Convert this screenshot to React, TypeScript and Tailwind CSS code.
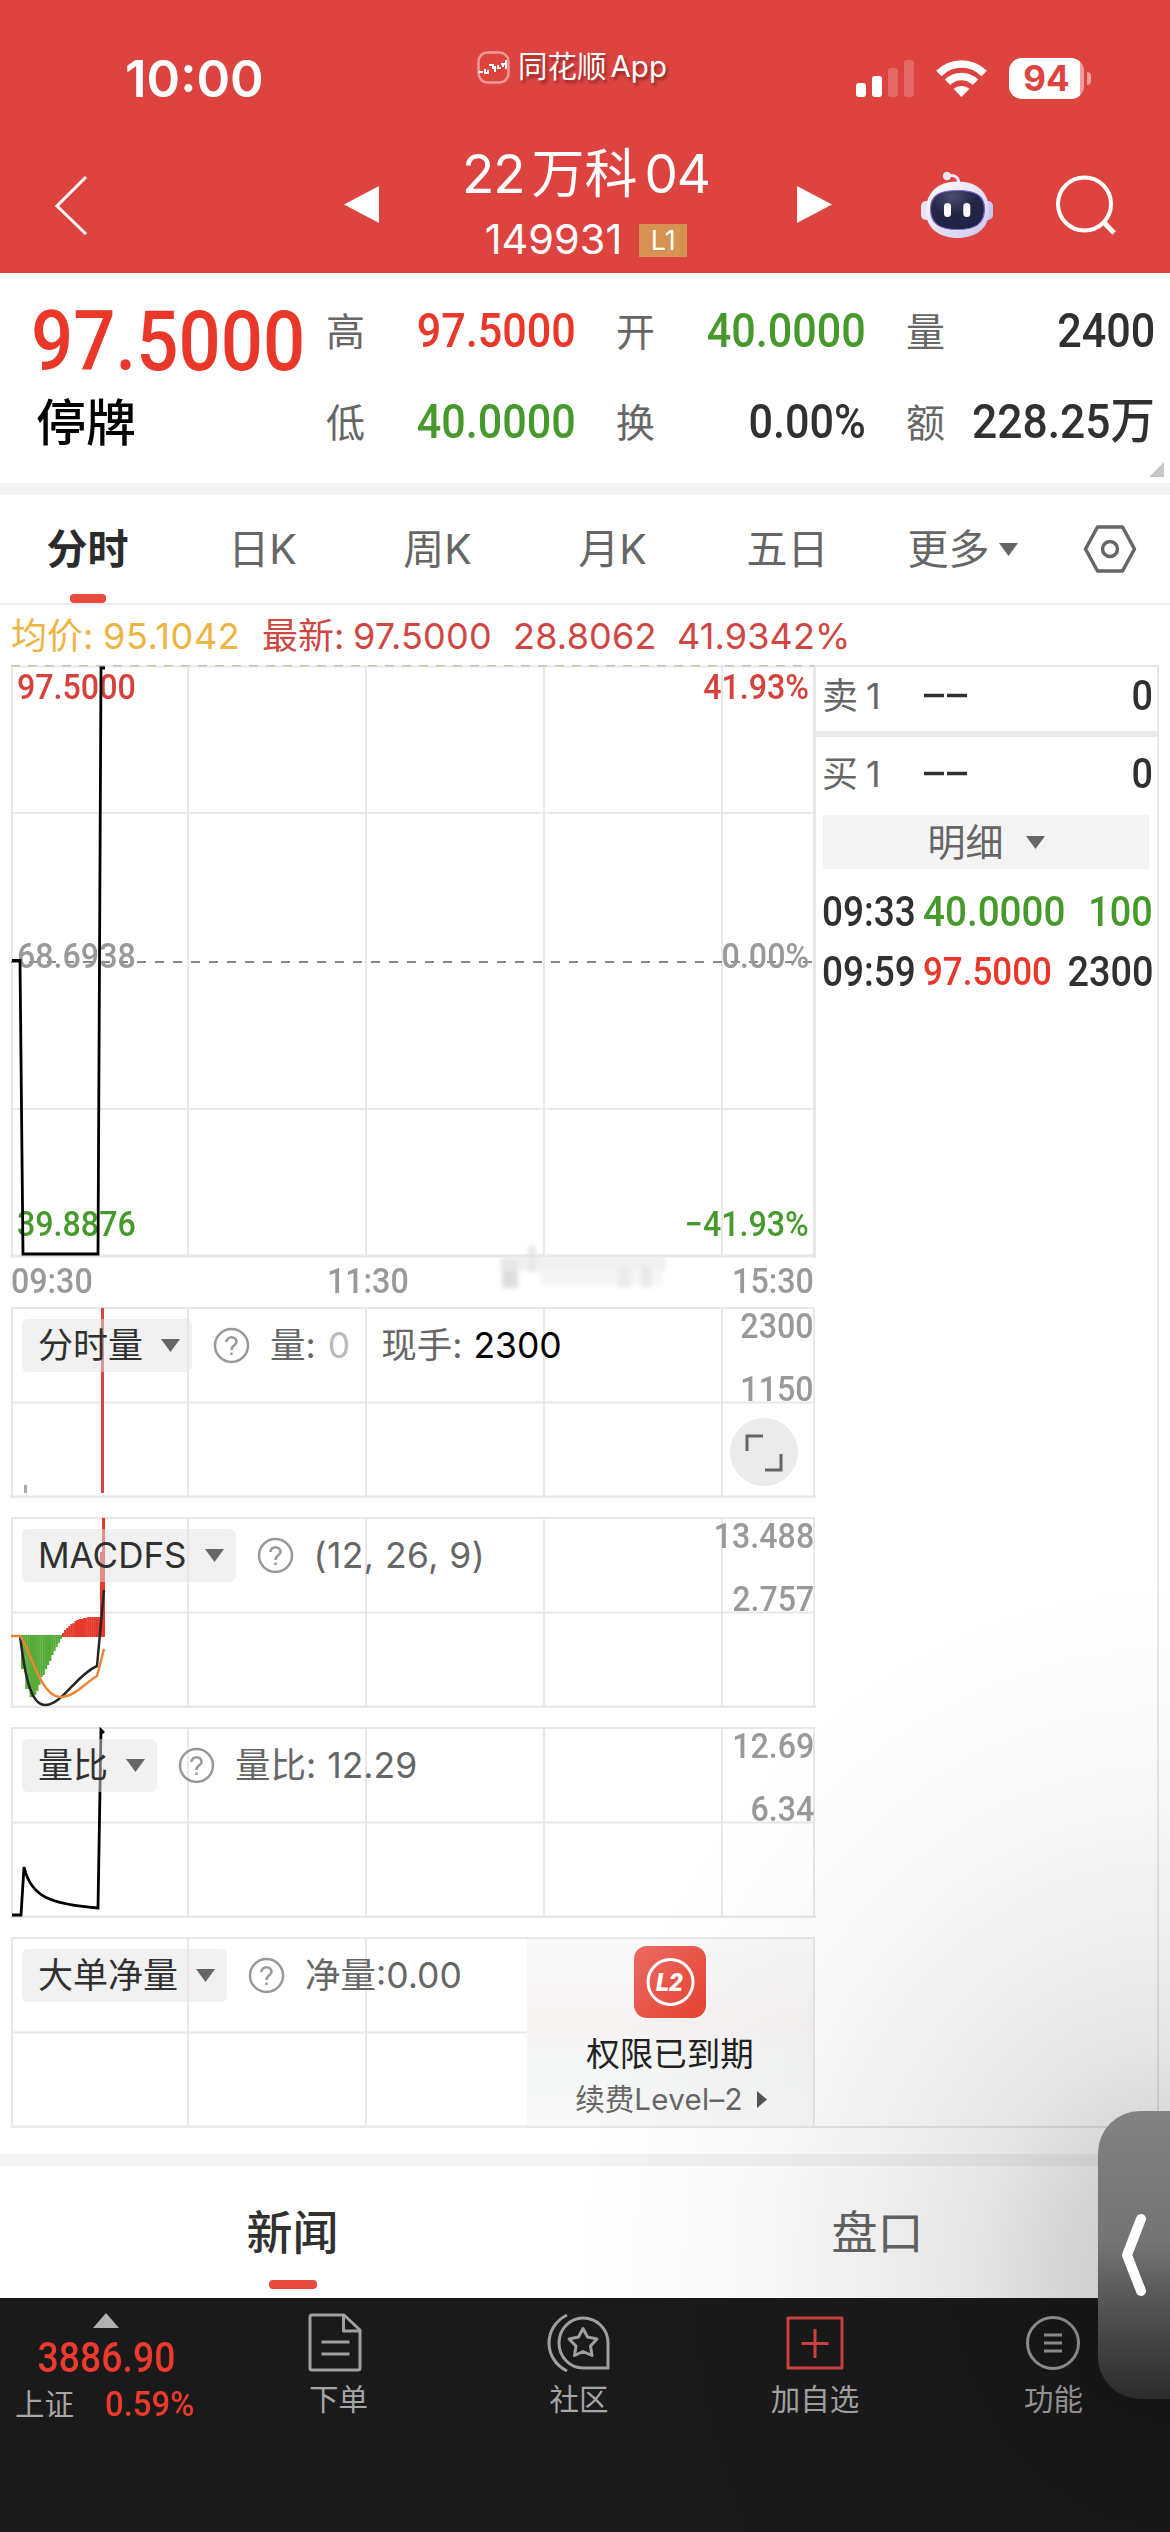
import { useState } from 'react';
import type { ReactNode } from 'react';
import clsx from 'clsx';

const STATS = [
  { label: '高', value: '97.5000', tone: 'text-[#e93829]' },
  { label: '开', value: '40.0000', tone: 'text-[#469a2c]' },
  { label: '量', value: '2400', tone: 'text-[#303030]' },
  { label: '低', value: '40.0000', tone: 'text-[#469a2c]' },
  { label: '换', value: '0.00%', tone: 'text-[#303030]' },
  { label: '额', value: '228.25万', tone: 'text-[#303030]' },
];

const PERIODS = ['分时', '日K', '周K', '月K', '五日'];

const GRID_X = [188, 366, 544, 722];

// MACD histogram bars, as offsets from the zero line
const MACD_DOWN = [34, 34, 54, 54, 62, 62, 60, 56, 50, 42, 40, 34, 30, 26, 20, 16, 12, 8, 4];
const MACD_UP = [4, 7, 9, 11, 13, 14, 16, 17, 18, 18, 19, 19, 20, 20, 20, 20, 20, 20];

export default function App() {
  const [period, setPeriod] = useState('分时');
  const [tab, setTab] = useState('新闻');

  return (
    <div className="relative w-[1170px] h-[2532px] overflow-hidden bg-white leading-none font-['Inter','Noto_Sans_CJK_SC',sans-serif]">
      <Header />

      {/* Quote */}
      <div className="flex h-[210px] pt-[13px] relative">
        <div className="w-[326px] pl-[31px] pt-[14px]">
          <div className="h-[84px] leading-[84px] text-[84px] font-medium text-[#e93829] font-['Roboto'] origin-left scale-x-[.885] whitespace-nowrap">97.5000</div>
          <div className="mt-[14px] pl-[5px] text-[50px] font-medium text-black">停牌</div>
        </div>
        <div className="grid grid-cols-[250px_250px_249px] gap-x-[40px] auto-rows-[91px]">
          {STATS.map((s) => (
            <div key={s.label} className="flex items-center justify-between whitespace-nowrap">
              <span className="text-[39px] text-[#666]">{s.label}</span>
              <span className={clsx("text-[48.5px] font-medium origin-right font-['Roboto','Noto_Sans_CJK_SC',sans-serif]", s.value.endsWith('万') ? 'scale-x-[.915]' : 'scale-x-[.89]', s.tone)}>{s.value}</span>
            </div>
          ))}
        </div>
        <svg className="absolute right-[6px] bottom-[6px]" width="15" height="15"><path d="M15 0V15H0Z" fill="#c8c8c8" /></svg>
      </div>
      <div className="h-[12px] bg-[#f3f3f3]" />

      {/* Period tabs */}
      <div className="grid grid-cols-[repeat(6,175px)_1fr] h-[110px] border-b-2 border-[#ebebeb] items-center">
        {PERIODS.map((p) => (
          <button
            key={p}
            onClick={() => setPeriod(p)}
            className={clsx('relative h-full text-[41px] cursor-pointer', p === period ? 'font-bold text-[#2b2b2b]' : 'text-[#666]')}
          >
            {p}
            {p === period && <span className="absolute bottom-0 left-1/2 -translate-x-1/2 w-[36px] h-[9px] rounded-[4px] bg-[#e74b3e]" />}
          </button>
        ))}
        <div className="flex items-center justify-center gap-[9px] text-[41px] text-[#666]">
          更多
          <DownArrow />
        </div>
        <svg className="mx-auto" width="54" height="50" fill="none" stroke="#666" strokeWidth="3.5" strokeLinejoin="round">
          <path d="M14.5 3H39.5L51.5 25L39.5 47H14.5L2.500 25Z" />
          <circle cx="27" cy="25" r="7.500" />
        </svg>
      </div>

      <div className="grid grid-cols-[92px_159px_91px_160px_164px_1fr] items-center h-[60px] pl-[11px] pt-px text-[36px] text-[#cf4642] whitespace-nowrap">
        <span className="text-[#edb441]">均价:</span>
        <span className="text-[#edb441] tracking-[.017em]">95.1042</span>
        <span>最新:</span>
        <span className="tracking-[.006em]">97.5000</span>
        <span className="tracking-[.006em]">28.8062</span>
        <span className="tracking-[.004em]">41.9342%</span>
      </div>

      <div className="flex h-[1489px]">
        <div className="w-[816px]">
          <PriceChart />
          <div className="relative grid grid-cols-[316px_1fr_auto] h-[49px] pt-[6px] pl-[11px] pr-[2px] items-start">
            <AxisText className="origin-left">09:30</AxisText>
            <AxisText className="origin-left">11:30</AxisText>
            <AxisText className="origin-right">15:30</AxisText>
            <svg className="absolute left-[490px] -top-[20px] blur-[2px]" width="190" height="60">
              <rect x="12" y="22" width="16" height="28" fill="#bbb" opacity=".5" />
              <rect x="38" y="8" width="8" height="26" fill="#ddd" opacity=".6" />
              <rect x="10" y="19" width="166" height="14" fill="#e9e9e9" opacity=".7" />
              <rect x="50" y="26" width="122" height="22" fill="#f2f2f2" opacity=".8" />
              <rect x="128" y="28" width="12" height="22" fill="#e6e6e6" opacity=".6" />
              <rect x="152" y="28" width="9" height="22" fill="#e3e3e3" opacity=".6" />
            </svg>
          </div>
          <VolumeChart />
          <MacdChart />
          <RatioChart />
          <NetChart />
        </div>
        <OrderBook />
      </div>

      <div className="h-[12px] bg-[#f3f3f3]" />
      <div className="grid grid-cols-2 h-[132px]">
        {['新闻', '盘口'].map((t) => (
          <button
            key={t}
            onClick={() => setTab(t)}
            className={clsx('relative text-[46px] cursor-pointer', t === tab ? 'font-medium text-[#303030]' : 'text-[#666]')}
          >
            {t}
            {t === tab && <span className="absolute bottom-[9px] left-1/2 -translate-x-1/2 w-[48px] h-[9px] rounded-[4px] bg-[#e74b3e]" />}
          </button>
        ))}
      </div>

      <BottomBar />

      {/* Side drawer handle with its shadow */}
      <div className="absolute right-0 top-[1500px] w-[800px] h-[1032px] pointer-events-none bg-[radial-gradient(ellipse_600px_700px_at_100%_75%,rgba(0,0,0,.24),rgba(0,0,0,.1)_33%,rgba(0,0,0,.03)_66%,rgba(0,0,0,0))]" />
      <div className="absolute right-0 top-[2111px] w-[72px] h-[288px] rounded-l-[42px] bg-linear-to-b from-[#828282] via-[#747474] via-45% to-[#2b2b2b] flex items-center justify-end pr-[20px]">
        <svg width="32" height="84" fill="none" stroke="#fff" strokeWidth="10" strokeLinecap="round" strokeLinejoin="round"><path d="M23 6L9 42L23 78" /></svg>
      </div>
    </div>
  );
}

function Header() {
  return (
    <div className="h-[273px] bg-[#dd4440] text-white">
      <div className="grid grid-cols-[477px_379px_1fr] items-center h-[136px] pt-[20px]">
        <span className="pl-[125px] text-[51px] font-semibold">10:00</span>
        <div className="flex items-center gap-[8px] -mt-[22px] text-[29.500px] whitespace-nowrap [text-shadow:2px_3px_3px_rgba(90,20,20,.6)]">
          <svg width="33" height="33" fill="none">
            <rect x="1.500" y="1.500" width="30" height="30" rx="9" stroke="#ee9a97" strokeWidth="2.500" />
            <path d="M2 21h4M8 18v4h3v-3M12 14h4v4M18 15v6M21 14v3h3M26 12v4M29 9v9M24 13h5" stroke="#fff" strokeWidth="2" />
          </svg>
          <span>同花顺<span className="ml-[4px]">App</span></span>
        </div>
        <div className="flex items-center">
          <svg width="58" height="37" fill="#fff">
            <rect y="23" width="10" height="14" rx="3" />
            <rect x="16" y="16" width="10" height="21" rx="3" />
            <rect x="32" y="8" width="10" height="29" rx="3" opacity=".2" />
            <rect x="48" width="10" height="37" rx="3" opacity=".2" />
          </svg>
          <svg className="ml-[22px]" width="51" height="37" viewBox="0 0 51 37" fill="none" stroke="#fff">
            <path d="M2.800 13.500C15.500 0.800 35.500 0.800 48.200 13.500" strokeWidth="7.500" />
            <path d="M11.500 22.300C19.500 14.600 31.500 14.600 39.500 22.300" strokeWidth="7.500" />
            <path d="M25.500 37L17.500 28.800C22.200 24.900 28.800 24.900 33.500 28.800Z" fill="#fff" stroke="none" />
          </svg>
          <div className="ml-[22px] w-[75px] h-[41px] rounded-[13px] bg-[linear-gradient(90deg,#fff_95%,#ee9f9c_95%)] text-[#dd4440] text-[35px] font-bold flex items-center justify-center">94</div>
          <div className="ml-[3px] w-[4px] h-[13px] rounded-r-full bg-[#ee9f9c]" />
        </div>
      </div>

      <div className="grid grid-cols-[344px_120px_333px_124px_135px_1fr] items-center h-[137px]">
        <svg className="ml-[54px]" width="34" height="60" fill="none" stroke="#fff" strokeWidth="3"><path d="M32 2L3 31L32 59" /></svg>
        <svg width="35" height="37"><path d="M35 0V37L0 18.500Z" fill="#fff" /></svg>
        <div className="w-[244px] self-start pt-[12px] flex flex-col items-center whitespace-nowrap">
          <div className="text-[53px] flex gap-[7px]"><span className="tracking-[-.02em]">22</span><span>万科</span><span className="tracking-[-.02em]">04</span></div>
          <div className="mt-[22px] h-[34px] flex items-center gap-[17px] text-[41.500px]">
            149931
            <span className="w-[48px] h-[33px] leading-[33px] text-center text-[27px] bg-[#d69153]">L1</span>
          </div>
        </div>
        <svg width="35" height="37"><path d="M0 0V37L35 18.500Z" fill="#fff" /></svg>
        <Robot />
        <svg width="62" height="62" fill="none" stroke="#fff" strokeWidth="4"><circle cx="28.500" cy="30" r="26.500" /><path d="M47.500 48L58 59" strokeWidth="5" /></svg>
      </div>
    </div>
  );
}

function Robot() {
  return (
    <svg width="72" height="68" viewBox="0 0 72 68">
      <defs>
        <linearGradient id="shell" x1="0" y1="0" x2="1" y2="1">
          <stop offset="0" stopColor="#fff" />
          <stop offset=".5" stopColor="#e4e4f6" />
          <stop offset="1" stopColor="#c9c8ee" />
        </linearGradient>
        <radialGradient id="visor" cx=".4" cy=".15" r=".9">
          <stop offset="0" stopColor="#4a4d70" />
          <stop offset=".5" stopColor="#222544" />
          <stop offset="1" stopColor="#1e2245" />
        </radialGradient>
      </defs>
      <path d="M27 5C34 3 38 7 37.500 12" fill="none" stroke="#eceaf6" strokeWidth="3" />
      <circle cx="26" cy="5" r="4.200" fill="#e9e6f4" />
      <rect y="30" width="12" height="19" rx="5" fill="#e6e4f5" />
      <rect x="60" y="30" width="12" height="19" rx="5" fill="#c5c8f0" />
      <path d="M36.500 10.500C57 10.500 68 22 68 40C68 58 54 67 36.500 67C19 67 5 58 5 40C5 22 16 10.500 36.500 10.500Z" fill="url(#shell)" />
      <path d="M36.500 19.500C54 19.500 63.500 24 63.500 38C63.500 53 54 58.500 36.500 58.500C19 58.500 9.500 53 9.500 38C9.500 24 19 19.500 36.500 19.500Z" fill="url(#visor)" stroke="#8064d8" strokeWidth="1.200" />
      <rect x="23" y="32" width="7" height="14" rx="3.500" fill="#fff" />
      <rect x="42.300" y="32" width="7" height="14" rx="3.500" fill="#fff" />
    </svg>
  );
}

function DownArrow() {
  return <svg className="shrink-0" width="19" height="13"><path d="M0 0H19L9.500 13Z" fill="#666" /></svg>;
}

function AxisText({ children, className }: { children: ReactNode; className?: string }) {
  return <span className={clsx("text-[35px] font-medium scale-x-[.92] whitespace-nowrap font-['Roboto']", className ?? '', !className?.includes('text-[#') && 'text-[#999]')}>{children}</span>;
}

function PriceChart() {
  return (
    <div className="relative h-[593px]">
      <svg className="absolute inset-0" width="816" height="593" fill="none">
        <g stroke="#e8e8e8" strokeWidth="2">
          <path d="M11 1.500H814M11 148H814M11 444H814M12 0V591" />
          {GRID_X.map((x) => <path key={x} d={`M${x} 0V591`} />)}
          <path d="M10 591H816" strokeWidth="3" />
        </g>
        <path d="M814.500 0V593" stroke="#e6e6e6" strokeWidth="3" />
        <path d="M11 0.500H814" stroke="#c3c6a8" strokeWidth="2" strokeDasharray="9 8" />
        <path d="M11 297H814" stroke="#888" strokeWidth="2" strokeDasharray="9 9" />
      </svg>
      <div className="absolute inset-x-0 top-[5px] flex justify-between pl-[17px] pr-[7px]">
        <AxisText className="origin-left text-[#d6413c]">97.5000</AxisText>
        <AxisText className="origin-right text-[#d6413c]">41.93%</AxisText>
      </div>
      <div className="absolute inset-x-0 top-[274px] flex justify-between pl-[17px] pr-[7px]">
        <AxisText className="origin-left">68.6938</AxisText>
        <AxisText className="origin-right">0.00%</AxisText>
      </div>
      <div className="absolute inset-x-0 top-[542px] flex justify-between pl-[17px] pr-[7px]">
        <AxisText className="origin-left text-[#469a2c]">39.8876</AxisText>
        <AxisText className="origin-right text-[#469a2c]">−41.93%</AxisText>
      </div>
      <svg className="absolute inset-0" width="816" height="593" fill="none" stroke="#000" strokeWidth="2.800">
        <path d="M12 295.500H20L23 589H98L101 3H105" />
      </svg>
    </div>
  );
}

type SubChartProps = {
  name: string;
  info: ReactNode;
  axis?: [string, string];
  drawing?: ReactNode;
  children?: ReactNode;
};

function SubChart({ name, info, axis, drawing, children }: SubChartProps) {
  return (
    <div className="relative h-[191px] mb-[19px]">
      <svg className="absolute inset-0" width="816" height="191" fill="none">
        <g stroke="#e8e8e8" strokeWidth="2">
          <path d="M11 1H814M11 95.500H814M12 0V190M814 0V190" />
          {GRID_X.map((x) => <path key={x} d={`M${x} 0V190`} />)}
          <path d="M10 190H816" strokeWidth="3" />
        </g>
        {drawing}
      </svg>
      <div className="relative pt-[12px] pl-[22px] flex items-center text-[35.500px] text-[#666] whitespace-nowrap">
        <div className="flex items-center h-[53px] pl-[16px] pr-[12px] gap-[18px] rounded-[6px] bg-[rgba(228,228,228,.5)] text-[#303030] text-[35px]">
          {name}
          <DownArrow />
        </div>
        <svg className="ml-[21px] mr-[20px] shrink-0" width="37" height="37" fill="none">
          <circle cx="18.500" cy="18.500" r="16.500" stroke="#999" strokeWidth="2.500" />
          <path d="M13.500 15C13.500 8.500 23.500 8.500 23.500 15C23.500 18.500 18.500 18 18.500 23M18.500 25.500V28" stroke="#999" strokeWidth="2.500" />
        </svg>
        {info}
      </div>
      {axis && (
        <div className="absolute right-[2px] top-[2px] flex flex-col items-end gap-[28px]">
          <AxisText className="origin-right">{axis[0]}</AxisText>
          <AxisText className="origin-right">{axis[1]}</AxisText>
        </div>
      )}
      {children}
    </div>
  );
}

function VolumeChart() {
  return (
    <SubChart
      name="分时量"
      axis={['2300', '1150']}
      info={<><span>量:</span><span className="ml-[12px] text-[#bbb]">0</span><span className="ml-[31px]">现手:</span><span className="ml-[11px] text-black">2300</span></>}
      drawing={<><path d="M102.500 1V186" stroke="#dd4440" strokeWidth="3" /><path d="M25.500 178V186" stroke="#aaa" strokeWidth="3" /></>}
    >
      <svg className="absolute left-[730px] top-[111px]" width="68" height="68" fill="none">
        <circle cx="34" cy="34" r="34" fill="#ebebeb" />
        <path d="M17 33V18H33M35 52H51V36" stroke="#666" strokeWidth="3" />
      </svg>
    </SubChart>
  );
}

function MacdChart() {
  return (
    <SubChart
      name="MACDFS"
      axis={['13.488', '2.757']}
      info={<span className="tracking-[.012em]">(12, 26, 9)</span>}
      drawing={
        <>
          {MACD_DOWN.map((h, i) => <rect key={i} x={21 + i * 2.15} y="118" width="2.400" height={h} fill="#57ab38" />)}
          {MACD_UP.map((h, i) => <rect key={i} x={62 + i * 2.1} y={120 - h} width="2.400" height={h} fill="#e7382d" />)}
          <path d="M101.500 35V120M103.500 1V120" stroke="#e7382d" strokeWidth="3" />
          <path d="M20 119C24 150 29 188 45 188C62 188 76 158 97 149L104 73" stroke="#262626" strokeWidth="2.500" />
          <path d="M11 119H20C29 128 40 180 60 180C75 180 86 165 97 159L104 132" stroke="#ee8434" strokeWidth="2.500" />
        </>
      }
    />
  );
}

function RatioChart() {
  return (
    <SubChart
      name="量比"
      axis={['12.69', '6.34']}
      info={<><span>量比:</span><span className="ml-[11px]">12.29</span></>}
      drawing={<path d="M12 188H21L24 140C31 170 50 177 98 181L101 3L104 6" stroke="#000" strokeWidth="2.800" />}
    />
  );
}

function NetChart() {
  return (
    <SubChart name="大单净量" info="净量:0.00">
      <div className="absolute left-[527px] top-[2px] w-[286px] h-[187px] pt-[7px] flex flex-col items-center bg-[linear-gradient(#f9f9f9,#f7f3f3_48%,#f4f7f6_65%,#f8f8f8)]">
        <svg width="72" height="72">
          <defs>
            <linearGradient id="l2" x1="0" y1="0" x2="1" y2="1"><stop stopColor="#ea6a64" /><stop offset="1" stopColor="#e8432f" /></linearGradient>
          </defs>
          <rect width="72" height="72" rx="13" fill="url(#l2)" />
          <circle cx="36.500" cy="36" r="22.500" fill="none" stroke="#fff" strokeWidth="3" />
          <text x="35.500" y="45" textAnchor="middle" fontFamily="Roboto" fontWeight="900" fontStyle="italic" fontSize="25" fill="#fff">L2</text>
        </svg>
        <div className="mt-[20px] text-[33.500px] text-[#222]">权限已到期</div>
        <div className="mt-[13px] ml-[2px] flex items-center gap-[14px] text-[29.500px] text-[#666] whitespace-nowrap">
          <span>续费<span className="tracking-[.01em]">Level–2</span></span>
          <svg width="10" height="17"><path d="M0 0L10 8.500L0 17Z" fill="#555" /></svg>
        </div>
      </div>
    </SubChart>
  );
}

function OrderBook() {
  return (
    <div className="w-[343px] h-[1463px] border-y-2 border-r-2 border-[#e8e8e8]">
      <BookRow label="卖" />
      <div className="h-[6px] bg-[#ebebeb]" />
      <BookRow label="买" tall />
      <div className="flex items-center justify-center gap-[22px] ml-[7px] mr-[8px] h-[54px] bg-[#f4f4f4] text-[38px] text-[#666]">
        明细
        <DownArrow />
      </div>
      <div className="pt-[13px]">
        <TradeRow time="09:33" price="40.0000" size="100" tone="text-[#469a2c] scale-x-[.92]" sizeTone="text-[#469a2c]" />
        <TradeRow time="09:59" price="97.5000" size="2300" tone="text-[#e93829] text-[38px] scale-x-[.92]" sizeTone="text-[#303030]" />
      </div>
    </div>
  );
}

function BookRow({ label, tall }: { label: string; tall?: boolean }) {
  return (
    <div className={clsx('grid grid-cols-[102px_1fr_auto] items-center pl-[6px] pr-[4px] text-[#303030]', tall ? 'h-[78px] pb-[5px]' : 'h-[64px] pb-[7px]')}>
      <span className="text-[36px] text-[#666]">{label}<span className="ml-[8px]">1</span></span>
      <svg width="43" height="5"><path d="M0 2.500H20M23 2.500H43" stroke="#303030" strokeWidth="3.500" /></svg>
      <span className="text-[42px] font-medium origin-right scale-x-[.9] font-['Roboto']">0</span>
    </div>
  );
}

function TradeRow({ time, price, size, tone, sizeTone }: { time: string; price: string; size: string; tone: string; sizeTone: string }) {
  return (
    <div className="grid grid-cols-[101px_132px_98px] items-center h-[60px] pl-[6px] text-[42px] font-medium whitespace-nowrap font-['Roboto']">
      <span className="origin-left scale-x-[.88] text-[#303030]">{time}</span>
      <span className={clsx('origin-left w-0', tone)}>{price}</span>
      <span className={clsx('justify-self-end origin-right scale-x-[.9]', sizeTone)}>{size}</span>
    </div>
  );
}

function BottomBar() {
  return (
    <div className="grid grid-cols-[212px_253px_228px_244px_1fr] h-[234px] pt-[15px] bg-[#1a1a1a] text-[#a6a6a6] text-[29.500px]">
      <div className="flex flex-col items-center whitespace-nowrap">
        <svg width="26" height="15"><path d="M13 0L26 15H0Z" fill="#b0b0b0" /></svg>
        <div className="mt-[9px] text-[42px] font-medium text-[#ee3a2c] scale-x-[.89] font-['Roboto']">3886.90</div>
        <div className="mt-[8px] flex items-center gap-[31px] self-start pl-[15px]">
          上证
          <span className="text-[35px] font-medium text-[#ee3a2c] origin-left scale-x-[.94] font-['Roboto']">0.59%</span>
        </div>
      </div>
      <NavItem label="下单">
        <path d="M5 2H37L53 17V55Q53 57 51 57H5Q3 57 3 55V4Q3 2 5 2ZM36.500 2V18H53M14.500 29H42.500M14.500 41H42.500" />
      </NavItem>
      <NavItem label="社区">
        <path d="M20 2C-4 14-4 46 20 58M61 55H36C23 55 12 44 12 30C12 16 23 5 36 5C50 5 61 16 61 30V55Z" />
        <path d="M36 15.500L40.500 24L50 26L43.500 33L45 42.500L36 38.500L27.500 42.500L29 33L22 26L31.500 24Z" />
      </NavItem>
      <NavItem label="加自选">
        <path d="M5 5H59V55H5ZM32 16V45M18.500 30.500H45.500" stroke="#d3443f" />
      </NavItem>
      <NavItem label="功能">
        <circle cx="31" cy="30" r="25.500" />
        <path d="M22 22H40M22 30H40M22 38H40" />
      </NavItem>
    </div>
  );
}

function NavItem({ label, children }: { label: string; children: ReactNode }) {
  return (
    <div className="flex flex-col items-center">
      <svg width="64" height="60" fill="none" stroke="#a0a0a0" strokeWidth="3" strokeLinejoin="round">{children}</svg>
      <span className="mt-[12px]">{label}</span>
    </div>
  );
}
